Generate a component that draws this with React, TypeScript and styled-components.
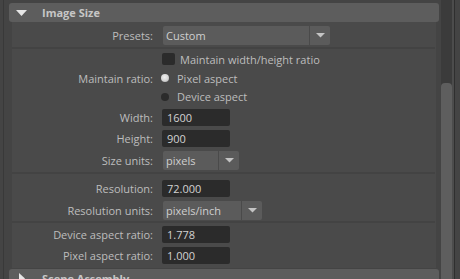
import React from "react";
import styled, { createGlobalStyle } from "styled-components";

const Global = createGlobalStyle`
  html, body { margin: 0; padding: 0; background: #444444; }
  body {
    font-family: "Open Sans", "Liberation Sans", sans-serif;
    font-size: 11px;
    color: #bdbdbd;
  }
`;

const Page = styled.div`
  display: flex;
  width: 460px;
  height: 279px;
  overflow: hidden;
  background: #444444;
`;

const Gutter = styled.div`
  flex: none;
  width: 5px;
  margin-left: 3px;
  border-left: 1px solid #393939;
`;

const Main = styled.div`
  flex: none;
  width: 430px;
  display: flex;
  flex-direction: column;
  padding-top: 3px;
`;

const FrameHeader = styled.div`
  flex: none;
  height: 19px;
  border-radius: 3px;
  background: #5d5d5d;
  display: flex;
  align-items: center;
`;

const HeaderArrow = styled.svg`
  flex: none;
  margin-left: 7px;
`;

const HeaderTitle = styled.span`
  margin-left: 15px;
  font-weight: 700;
  color: #c6c6c6;
  white-space: nowrap;
`;

const Body = styled.div`
  margin: 0 3px 1px;
  background: #4a4a4a;
  padding: 4px 0 2px;
  display: flex;
  flex-direction: column;
`;

const Row = styled.div<{ $h: number }>`
  display: grid;
  grid-template-columns: 141px auto;
  column-gap: 9px;
  align-items: center;
  height: ${(p) => p.$h}px;
`;

const Label = styled.span`
  text-align: right;
  white-space: nowrap;
`;

const Separator = styled.div<{ $mt: number; $mb: number }>`
  height: 2px;
  margin: ${(p) => p.$mt}px 1px ${(p) => p.$mb}px 0;
  background: #434343;
`;

const Field = styled.div`
  width: 68px;
  height: 17px;
  box-sizing: border-box;
  padding-left: 5px;
  background: #2b2b2b;
  border-radius: 2px;
  color: #d2d2d2;
  display: flex;
  align-items: center;
`;

const Dropdown = styled.div`
  display: flex;
  gap: 1px;
  height: 19px;
  margin-left: 1px;
`;

const DropValue = styled.div<{ $w: number }>`
  width: ${(p) => p.$w}px;
  box-sizing: border-box;
  padding-left: 3px;
  background: #5b5b5b;
  border-radius: 2px 0 0 2px;
  color: #cfcfcf;
  display: flex;
  align-items: center;
`;

const DropButton = styled.div`
  width: 20px;
  background: #5b5b5b;
  border-radius: 0 2px 2px 0;
  display: flex;
  align-items: center;
  justify-content: center;
`;

const Option = styled.div`
  display: flex;
  align-items: center;
  white-space: nowrap;
`;

const Check = styled.span`
  width: 13px;
  height: 12px;
  background: #2b2b2b;
  border-radius: 2px;
  margin-right: 5px;
  flex: none;
`;

const Radio = styled.span<{ $on?: boolean }>`
  width: 8px;
  height: 8px;
  border-radius: 50%;
  margin: 0 8px 0 -1px;
  flex: none;
  background: ${(p) =>
    p.$on ? "radial-gradient(circle at 45% 40%, #f0f0f0 0%, #d4d4d4 55%, #9a9a9a 100%)" : "#2b2b2b"};
`;

const Scroll = styled.div`
  flex: none;
  width: 11px;
  margin-left: 2px;
  background: #3b3b3b;
  display: flex;
  flex-direction: column;
  padding-top: 83px;
  box-sizing: border-box;
`;

const Thumb = styled.div`
  flex: 1;
  background: #5e5e5e;
  border-radius: 4px 4px 0 0;
`;

const EdgeStrip = styled.div`
  flex: none;
  width: 2px;
  background: #4c4c4c;
  border-right: 1px solid #2f2f2f;
`;

const Arrow = () => (
  <svg width="9" height="5" viewBox="0 0 9 5">
    <polygon points="0,0 9,0 4.5,4.5" fill="#c4c4c4" />
  </svg>
);

const Select = ({ value, w }: { value: string; w: number }) => (
  <Dropdown>
    <DropValue $w={w}>{value}</DropValue>
    <DropButton>
      <Arrow />
    </DropButton>
  </Dropdown>
);

export default function App() {
  return (
    <>
      <Global />
      <Page>
        <Gutter />
        <Main>
          <FrameHeader>
            <HeaderArrow width="11" height="6" viewBox="0 0 11 6">
              <polygon points="0,0 11,0 5.5,6" fill="#e6e6e6" />
            </HeaderArrow>
            <HeaderTitle>Image Size</HeaderTitle>
          </FrameHeader>
          <Body>
            <Row $h={18}>
              <Label>Presets:</Label>
              <Select value="Custom" w={146} />
            </Row>
            <Separator $mt={3} $mb={0} />
            <Row $h={20}>
              <span />
              <Option>
                <Check />
                Maintain width/height ratio
              </Option>
            </Row>
            <Row $h={18}>
              <Label>Maintain ratio:</Label>
              <Option>
                <Radio $on />
                Pixel aspect
              </Option>
            </Row>
            <Row $h={19}>
              <span />
              <Option>
                <Radio />
                Device aspect
              </Option>
            </Row>
            <Row $h={22}>
              <Label>Width:</Label>
              <Field>1600</Field>
            </Row>
            <Row $h={21}>
              <Label>Height:</Label>
              <Field>900</Field>
            </Row>
            <Row $h={23}>
              <Label>Size units:</Label>
              <Select value="pixels" w={55} />
            </Row>
            <Separator $mt={0} $mb={3} />
            <Row $h={23}>
              <Label>Resolution:</Label>
              <Field>72.000</Field>
            </Row>
            <Row $h={20}>
              <Label>Resolution units:</Label>
              <Select value="pixels/inch" w={78} />
            </Row>
            <Separator $mt={1} $mb={1} />
            <Row $h={21}>
              <Label>Device aspect ratio:</Label>
              <Field>1.778</Field>
            </Row>
            <Row $h={21}>
              <Label>Pixel aspect ratio:</Label>
              <Field>1.000</Field>
            </Row>
          </Body>
          <FrameHeader>
            <HeaderArrow width="11" height="11" viewBox="0 0 11 11">
              <polygon points="3,0 9,5.5 3,11" fill="#e6e6e6" />
            </HeaderArrow>
            <HeaderTitle>Scene Assembly</HeaderTitle>
          </FrameHeader>
        </Main>
        <Scroll>
          <Thumb />
        </Scroll>
        <EdgeStrip />
      </Page>
    </>
  );
}
